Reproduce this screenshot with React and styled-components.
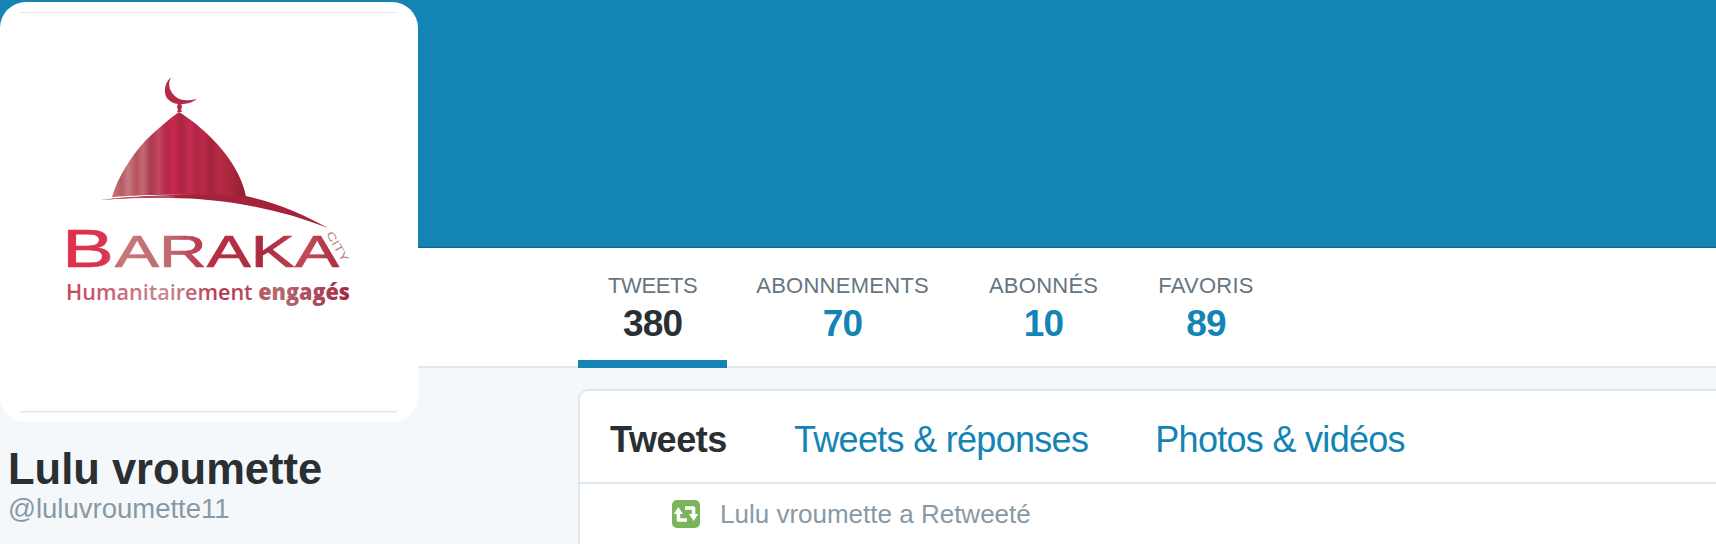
import React from 'react';
import styled, { createGlobalStyle } from 'styled-components';

const BLUE = '#1384b4';

const GlobalStyle = createGlobalStyle`
  html, body {
    margin: 0;
    padding: 0;
    background: #f5f8fa;
    font-family: "Liberation Sans", Arial, sans-serif;
    overflow: hidden;
  }
`;

const Page = styled.div`
  position: relative;
  width: 1716px;
  height: 544px;
  overflow: hidden;
  background: #f5f8fa;
`;

const Banner = styled.div`
  height: 248px;
  background: linear-gradient(to bottom, ${BLUE} 246px, #0f6f98 247px, #0c5f82 248px);
`;

const Nav = styled.nav`
  display: flex;
  height: 118px;
  padding-left: 578px;
  background: #fff;
  border-bottom: 2px solid #e1e8ed;
`;

const Stat = styled.a`
  display: flex;
  flex-direction: column;
  align-items: center;
  box-sizing: border-box;
  height: 120px;
  padding: 26px 30px 0;
  margin-right: ${({ $active }) => ($active ? '-1px' : '0')};
  border-bottom: 8px solid ${({ $active }) => ($active ? BLUE : 'transparent')};
`;

const StatLabel = styled.span`
  font-size: 22px;
  line-height: 24px;
  letter-spacing: ${({ $active }) => ($active ? '-0.4px' : '0.25px')};
  color: #66757f;
`;

const StatValue = styled.span`
  margin-top: 6px;
  font-size: 37px;
  line-height: 40px;
  font-weight: 700;
  letter-spacing: -0.8px;
  color: ${({ $active }) => ($active ? '#292f33' : BLUE)};
`;

const Main = styled.div`
  display: flex;
`;

const Side = styled.aside`
  box-sizing: border-box;
  width: 578px;
  flex: none;
  padding: 79px 0 0 8px;
`;

const Name = styled.h1`
  margin: 0;
  font-size: 43.5px;
  line-height: 44px;
  font-weight: 700;
  color: #292f33;
`;

const Handle = styled.div`
  margin-top: 3px;
  font-size: 27.5px;
  line-height: 30px;
  color: #8899a6;
`;

const Card = styled.section`
  flex: 1;
  margin-top: 21px;
  background: #fff;
  border: 2px solid #e1e8ed;
  border-right: 0;
  border-radius: 10px 0 0 0;
`;

const Tabs = styled.div`
  display: flex;
  gap: 67px;
  box-sizing: content-box;
  height: 85px;
  padding: 6px 0 0 30px;
  align-items: center;
  border-bottom: 2px solid #e1e8ed;
`;

const Tab = styled.a`
  font-size: 36px;
  letter-spacing: ${({ $active }) => ($active ? '-0.4px' : '-0.7px')};
  font-weight: ${({ $active }) => ($active ? 700 : 400)};
  color: ${({ $active }) => ($active ? '#292f33' : BLUE)};
`;

const Context = styled.div`
  display: flex;
  align-items: center;
  gap: 20px;
  height: 60px;
  padding-left: 92px;
  font-size: 26px;
  color: #8899a6;
`;

const RetweetBadge = styled.svg`
  width: 28px;
  height: 28px;
  flex: none;
`;

const Avatar = styled.div`
  position: absolute;
  left: 0;
  top: 2px;
  width: 418px;
  height: 420px;
  background: #fff;
  border-radius: 26px;
`;

const Logo = styled.svg`
  display: block;
  width: 418px;
  height: 420px;
`;

const stripes = [
  ['0%', '#c9737a'],
  ['7%', '#b85a64'],
  ['12%', '#c77a80'],
  ['18%', '#b9525f'],
  ['23%', '#c36a72'],
  ['29%', '#ad3a4d'],
  ['35%', '#c24a62'],
  ['40%', '#b52848'],
  ['46%', '#c6294f'],
  ['52%', '#ac2542'],
  ['58%', '#c22c50'],
  ['63%', '#b02644'],
  ['68%', '#bc2a4a'],
  ['74%', '#a3223c'],
  ['80%', '#b72a45'],
  ['90%', '#a82639'],
  ['100%', '#8e1f2f'],
];

const BarakaLogo = () => (
  <Logo viewBox="0 2 418 420" aria-label="BarakaCity">
    <defs>
      <linearGradient id="dome" gradientUnits="userSpaceOnUse" x1="112" y1="0" x2="246" y2="0">
        {stripes.map(([offset, color]) => (
          <stop key={offset} offset={offset} stopColor={color} />
        ))}
      </linearGradient>
      <linearGradient id="word" gradientUnits="userSpaceOnUse" x1="66" y1="0" x2="340" y2="0">
        <stop offset="0%" stopColor="#e0304f" />
        <stop offset="14%" stopColor="#d8344f" />
        <stop offset="20%" stopColor="#c9767c" />
        <stop offset="38%" stopColor="#bd6a70" />
        <stop offset="52%" stopColor="#b92f47" />
        <stop offset="72%" stopColor="#a92c3f" />
        <stop offset="88%" stopColor="#c04a58" />
        <stop offset="100%" stopColor="#a92c3f" />
      </linearGradient>
      <linearGradient id="slogan" gradientUnits="userSpaceOnUse" x1="66" y1="0" x2="350" y2="0">
        <stop offset="0%" stopColor="#c8435f" />
        <stop offset="35%" stopColor="#c98a8f" />
        <stop offset="55%" stopColor="#b6324f" />
        <stop offset="75%" stopColor="#b56a72" />
        <stop offset="100%" stopColor="#a42a42" />
      </linearGradient>
    </defs>
    <rect x="20" y="12" width="377" height="1" fill="#e2e4e6" />
    <rect x="20" y="411" width="377" height="1.4" fill="#e0e3e7" />
    <path
      d="M171 77 C163 84 163 97 170 101 C177 106 189 105 197 99 C188 101 181 101 176 97 C170 92 167 85 171 77 Z"
      fill="#b52a48"
    />
    <path d="M178 103 h3 l1 4 l-1 3 l1 2 h-5 l1 -2 l-1 -3 Z" fill="#b52a48" />
    <path
      d="M179 112 C200 125 228 150 240 178 C243 185 245 191 246 197 C200 194 150 194 112 197 C118 177 130 158 145 141 C156 130 168 120 179 112 Z"
      fill="url(#dome)"
    />
    <path
      d="M100 200 C150 194 205 194 246 196 C278 203 305 215 328 228 C300 217 270 209 240 204 C200 197 150 196 100 200 Z"
      fill="#a3233a"
    />
    <path d="M100 200 C125 197 150 196 175 196 L175 197 C150 197 125 198 100 200 Z" fill="#c25a68" />
    <text
      x="62"
      y="267"
      fontFamily='"Liberation Sans", sans-serif'
      fontSize="54.5"
      textLength="52"
      lengthAdjust="spacingAndGlyphs"
      fill="url(#word)"
      stroke="url(#word)"
      strokeWidth="0.7"
    >
      B
    </text>
    <text
      x="115"
      y="267"
      fontFamily='"Liberation Sans", sans-serif'
      fontSize="45"
      textLength="224"
      lengthAdjust="spacingAndGlyphs"
      fill="url(#word)"
      stroke="url(#word)"
      strokeWidth="0.7"
    >
      ARAKA
    </text>
    <text
      transform="translate(326 234) rotate(60)"
      fontFamily='"Liberation Sans", sans-serif'
      fontSize="11"
      textLength="33"
      lengthAdjust="spacingAndGlyphs"
      fill="#bd7d86"
    >
      CITY
    </text>
    <text
      x="66"
      y="300"
      fontFamily='"Open Sans", sans-serif'
      fontSize="22"
      fontWeight="600"
      textLength="284"
      lengthAdjust="spacingAndGlyphs"
      fill="url(#slogan)"
    >
      Humanitairement <tspan fontWeight="800">engagés</tspan>
    </text>
  </Logo>
);

const stats = [
  { label: 'TWEETS', value: '380', active: true },
  { label: 'ABONNEMENTS', value: '70' },
  { label: 'ABONNÉS', value: '10' },
  { label: 'FAVORIS', value: '89' },
];

const tabs = [
  { label: 'Tweets', active: true },
  { label: 'Tweets & réponses' },
  { label: 'Photos & vidéos' },
];

export default function App() {
  return (
    <Page>
      <GlobalStyle />
      <Banner />
      <Nav>
        {stats.map((s) => (
          <Stat key={s.label} $active={s.active}>
            <StatLabel $active={s.active}>{s.label}</StatLabel>
            <StatValue $active={s.active}>{s.value}</StatValue>
          </Stat>
        ))}
      </Nav>
      <Main>
        <Side>
          <Name>Lulu vroumette</Name>
          <Handle>@luluvroumette11</Handle>
        </Side>
        <Card>
          <Tabs>
            {tabs.map((t) => (
              <Tab key={t.label} $active={t.active}>
                {t.label}
              </Tab>
            ))}
          </Tabs>
          <Context>
            <RetweetBadge viewBox="0 0 28 28">
              <rect width="28" height="28" rx="5" fill="#7ab55c" />
              <path
                d="M6.3 7 L11 14 H8.2 V18.3 H15 V21.7 H6.5 C5.3 21.7 4.7 21 4.7 20 V14 H1.8 Z"
                fill="#fff"
              />
              <path
                d="M21.7 21 L17 14 H19.8 V9.7 H13 V6.3 H21.5 C22.7 6.3 23.3 7 23.3 8 V14 H26.2 Z"
                fill="#fff"
              />
            </RetweetBadge>
            Lulu vroumette a Retweeté
          </Context>
        </Card>
      </Main>
      <Avatar>
        <BarakaLogo />
      </Avatar>
    </Page>
  );
}
